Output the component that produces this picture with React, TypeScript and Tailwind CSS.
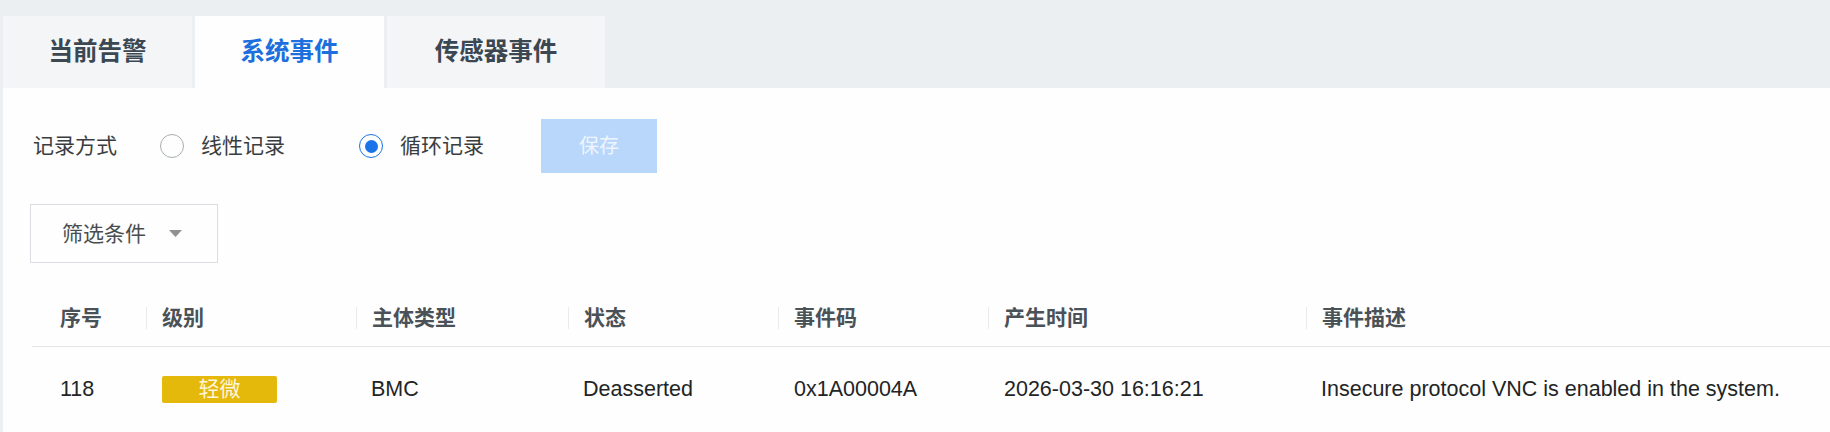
import { useState } from 'react'

const font = "font-['Liberation_Sans','Noto_Sans_CJK_SC',sans-serif]"

const tabs = [
    { label: '当前告警', width: 'w-[189px]' },
    { label: '系统事件', width: 'w-[189px]' },
    { label: '传感器事件', width: 'w-[218px]' },
]

const columns = [
    { title: '序号', width: 'w-[114px]' },
    { title: '级别', width: 'w-[210px]' },
    { title: '主体类型', width: 'w-[212px]' },
    { title: '状态', width: 'w-[210px]' },
    { title: '事件码', width: 'w-[210px]' },
    { title: '产生时间', width: 'w-[318px]' },
    { title: '事件描述', width: 'flex-1' },
]

function Radio({ checked, label, onClick }: { checked: boolean; label: string; onClick: () => void }) {
    return (
        <button type="button" onClick={onClick} className="flex items-center">
            <span
                className={`flex h-[24px] w-[24px] items-center justify-center rounded-full border ${
                    checked ? 'border-[#1a73e8]' : 'border-[#a9aeb3]'
                }`}
            >
                {checked && <span className="h-[13px] w-[13px] rounded-full bg-[#1a73e8]" />}
            </span>
            <span className="ml-[17px] text-[21px] text-[#3a3d40]">{label}</span>
        </button>
    )
}

export default function App() {
    const [active, setActive] = useState(1)
    const [mode, setMode] = useState<'linear' | 'loop'>('loop')

    return (
        <div className={`flex h-[432px] w-[1830px] flex-col overflow-hidden bg-[#ebeff2] ${font}`}>
            {/* Tabs */}
            <div className="flex h-[88px] shrink-0 items-end gap-[3px] pl-[3px]">
                {tabs.map((t, i) => (
                    <button
                        key={t.label}
                        type="button"
                        onClick={() => setActive(i)}
                        className={`flex h-[72px] items-center justify-center text-[24.5px] font-bold ${t.width} ${
                            active === i ? 'bg-[#fdfefd] text-[#1c6fdc]' : 'bg-[#f3f5f7] text-[#3b4751]'
                        }`}
                    >
                        {t.label}
                    </button>
                ))}
            </div>

            {/* Content */}
            <div className="ml-[3px] flex flex-1 flex-col bg-[#fdfefd] pt-[31px]">
                <div className="flex h-[54px] items-center pl-[30px]">
                    <span className="text-[21px] text-[#3a3d40]">记录方式</span>
                    <div className="ml-[43px]">
                        <Radio checked={mode === 'linear'} label="线性记录" onClick={() => setMode('linear')} />
                    </div>
                    <div className="ml-[74px]">
                        <Radio checked={mode === 'loop'} label="循环记录" onClick={() => setMode('loop')} />
                    </div>
                    <button
                        type="button"
                        disabled
                        className="ml-[57px] h-[54px] w-[116px] bg-[#b9d7fa] text-[20px] text-[#eef5fe]"
                    >
                        保存
                    </button>
                </div>

                <div className="ml-[27px] mt-[31px] flex h-[59px] w-[188px] items-center border border-[#dadee2] pl-[31px]">
                    <span className="text-[21px] text-[#4a4d50]">筛选条件</span>
                    <svg width="13" height="7" viewBox="0 0 13 7" className="ml-[23px]">
                        <path d="M0 0 L13 0 L6.5 7 Z" fill="#8e9295" />
                    </svg>
                </div>

                {/* Table */}
                <div className="ml-[29px] mt-[27px] flex flex-col">
                    <div className="flex h-[57px] items-center border-b border-[#e2e5e8]">
                        {columns.map((c, i) => (
                            <div key={c.title} className={`flex h-full items-center ${c.width}`}>
                                {i > 0 && <span className="h-[22px] w-px bg-[#e8eaec]" />}
                                <span
                                    className={`text-[21px] font-bold text-[#4a5157] ${
                                        i === 0 ? 'ml-[28px]' : 'ml-[15px]'
                                    }`}
                                >
                                    {c.title}
                                </span>
                            </div>
                        ))}
                    </div>
                    <div className="flex h-[84px] items-center text-[21.5px] text-[#222426]">
                        <div className="w-[114px] pl-[28px]">118</div>
                        <div className="w-[210px] pl-[16px]">
                            <span className="flex h-[27px] w-[115px] items-center justify-center rounded-[2px] bg-[#e5b80c] text-[21px] text-[#fdf6dc]">
                                轻微
                            </span>
                        </div>
                        <div className="w-[212px] pl-[15px]">BMC</div>
                        <div className="w-[210px] pl-[15px]">Deasserted</div>
                        <div className="w-[210px] pl-[16px]">0x1A00004A</div>
                        <div className="w-[318px] pl-[16px]">2026-03-30 16:16:21</div>
                        <div className="flex-1 pl-[15px]">Insecure protocol VNC is enabled in the system.</div>
                    </div>
                </div>
            </div>
        </div>
    )
}
